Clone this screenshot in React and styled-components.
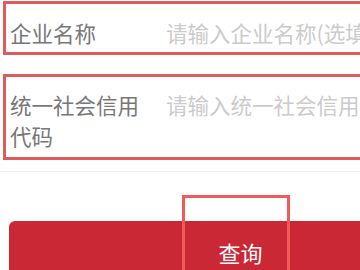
import React from 'react';
import styled, { createGlobalStyle } from 'styled-components';

const GlobalStyle = createGlobalStyle`
  html, body {
    margin: 0;
    padding: 0;
    background: #fff;
    overflow: hidden;
  }
  body {
    width: 360px;
    height: 270px;
    font-family: "Noto Sans CJK SC", "Noto Sans", sans-serif;
  }
`;

const Page = styled.div`
  position: relative;
  width: 360px;
  height: 270px;
  overflow: hidden;
  padding-top: 1px;
  box-sizing: border-box;
`;

const FieldRow = styled.div`
  display: flex;
  align-items: flex-start;
  width: 420px;
  margin-left: 3px;
  margin-top: ${(p) => p.$gap || 0}px;
  padding: ${(p) => (p.$tall ? '12px 0 6px' : '13px 0 4px')};
  border: 3px solid #e05b5c;
  border-right: none;
  box-sizing: content-box;
`;

const Label = styled.div`
  flex: 0 0 160px;
  padding-left: 4px;
  padding-right: 24px;
  box-sizing: border-box;
  font-size: 21.5px;
  line-height: 31px;
  color: #777;
  word-break: break-all;
`;

const Input = styled.input`
  flex: 1;
  min-width: 0;
  height: 31px;
  padding: 0;
  border: none;
  outline: none;
  background: transparent;
  font-family: inherit;
  font-size: 21.5px;
  line-height: 31px;
  color: #333;
  &::placeholder {
    color: #cbcbcb;
  }
`;

const Divider = styled.div`
  margin-top: 11px;
  height: 1px;
  background: #f2f2f2;
`;

const SubmitButton = styled.button`
  display: flex;
  align-items: center;
  justify-content: center;
  margin: 49px 0 0 9px;
  width: 463px;
  height: 62px;
  border: none;
  border-radius: 6px;
  background: #c92834;
  color: #fff;
  font-family: inherit;
  font-size: 22px;
  padding: 0;
`;

const Highlight = styled.div`
  position: absolute;
  left: 182px;
  top: 195px;
  width: 102px;
  height: 100px;
  border: 3px solid #f05a5a;
  pointer-events: none;
`;

export default function App() {
  return (
    <>
      <GlobalStyle />
      <Page>
        <FieldRow>
          <Label>企业名称</Label>
          <Input placeholder="请输入企业名称(选填)" />
        </FieldRow>
        <FieldRow $gap={19} $tall>
          <Label>统一社会信用代码</Label>
          <Input placeholder="请输入统一社会信用代码" />
        </FieldRow>
        <Divider />
        <SubmitButton>查询</SubmitButton>
        <Highlight />
      </Page>
    </>
  );
}
